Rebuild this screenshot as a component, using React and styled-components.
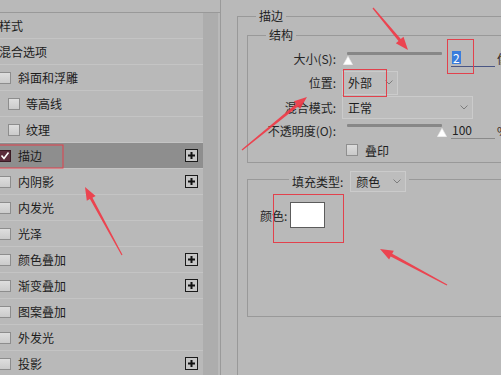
import React from "react";
import styled, { createGlobalStyle } from "styled-components";

const Global = createGlobalStyle`
  html, body { margin: 0; padding: 0; background: #b9b9b9; }
  body { font-family: "Noto Sans CJK SC", "Noto Sans", sans-serif; }
`;

const Page = styled.div`
  position: relative;
  width: 501px;
  height: 375px;
  overflow: hidden;
  display: flex;
  background: #b9b9b9;
  font-family: "Noto Sans CJK SC", "Noto Sans", sans-serif;
  font-size: 12px;
  color: #1f1f1f;
`;

/* ---------- left: style list ---------- */
const Sidebar = styled.aside`
  flex: 0 0 220px;
  border-right: 1px solid #9a9a9a;
  padding-top: 12px;
  display: flex;
  flex-direction: column;
  overflow: hidden;
`;

const SideBody = styled.div`
  flex: 1;
  display: flex;
  border-top: 1px solid #999;
`;

const List = styled.ul`
  list-style: none;
  margin: 0 0 0 -1px;
  padding: 0;
  flex: 0 0 204px;
`;

const Scroll = styled.div`
  flex: 0 0 15px;
  background: #adadad;
  margin-right: 2px;
`;

const Row = styled.li`
  height: 26px;
  box-sizing: border-box;
  display: flex;
  align-items: center;
  padding-left: ${(p) => (p.$indent ? 9 : 0)}px;
  border-bottom: 1px solid #c4c4c4;
  background: ${(p) => (p.$selected ? "#8e8e8e" : "transparent")};
  white-space: nowrap;
  line-height: 16px;
`;

const Box = styled.span`
  flex: 0 0 auto;
  width: 12px;
  height: 12px;
  box-sizing: border-box;
  margin-right: ${(p) => (p.$indent ? 6 : 7)}px;
  border: 1px solid ${(p) => (p.$checked ? "#3a1a24" : "#8d8d8d")};
  background: ${(p) =>
    p.$checked ? "#5b2c3c" : "linear-gradient(#dedede, #cbcbcb)"};
  display: flex;
  align-items: center;
  justify-content: center;
`;

const ItemText = styled.span`
  color: #1c1c1c;
`;

const PlusWrap = styled.span`
  margin-left: auto;
  margin-right: 5px;
  display: flex;
`;

const PlusIcon = () => (
  <PlusWrap>
    <svg width="13" height="13" viewBox="0 0 13 13">
      <rect x="0.5" y="0.5" width="12" height="12" fill="#c6c6c6" stroke="#1a1a1a" />
      <rect x="3" y="5.5" width="7" height="2" fill="#111" />
      <rect x="5.5" y="3" width="2" height="7" fill="#111" />
    </svg>
  </PlusWrap>
);

const Check = () => (
  <svg width="10" height="10" viewBox="0 0 10 10">
    <path d="M1.5 4.5 L4 7.5 L8.5 1.5" fill="none" stroke="#fff" strokeWidth="1.6" />
  </svg>
);

const items = [
  { t: "样式", plain: true },
  { t: "混合选项", plain: true },
  { t: "斜面和浮雕" },
  { t: "等高线", indent: true },
  { t: "纹理", indent: true },
  { t: "描边", checked: true, selected: true, plus: true },
  { t: "内阴影", plus: true },
  { t: "内发光" },
  { t: "光泽" },
  { t: "颜色叠加", plus: true },
  { t: "渐变叠加", plus: true },
  { t: "图案叠加" },
  { t: "外发光" },
  { t: "投影", plus: true },
];

/* ---------- right: stroke settings ---------- */
const Main = styled.main`
  flex: 1;
  min-width: 0;
  overflow: hidden;
  padding-top: 8px;
`;

const OuterGroup = styled.fieldset`
  margin: 0 0 0 16px;
  padding: 0;
  width: 330px;
  height: 420px;
  box-sizing: border-box;
  border: 1px solid #999;
  min-width: 0;
`;

const Legend = styled.legend`
  margin-left: ${(p) => p.$ml}px;
  padding: 0 3px;
  line-height: 16px;
  color: #1f1f1f;
`;

const SubGroup = styled.fieldset`
  margin: ${(p) => p.$mt}px 0 0 9px;
  padding: 0;
  border: 1px solid #999;
  min-width: 0;
`;

const Form = styled.div`
  display: grid;
  grid-template-columns: 88px 1fr;
  grid-template-rows: 24px 25px 25px 20px 20px;
  column-gap: 6px;
  padding: 3px 0 2px 0;
  align-items: center;
`;

const Label = styled.span`
  text-align: right;
  color: #262626;
  white-space: nowrap;
`;

const Field = styled.div`
  display: flex;
  align-items: center;
  white-space: nowrap;
`;

const Slider = styled.div`
  flex: 0 0 95px;
  width: 95px;
  margin-left: 5px;
  display: flex;
  flex-direction: column;
  align-items: flex-start;
  gap: 1px;
`;

const Track = styled.div`
  align-self: stretch;
  height: 3px;
  background: #878787;
  border-radius: 1px;
`;

const ThumbWrap = styled.span`
  display: flex;
  flex: none;
  width: 10px;
  margin-left: ${(p) => p.$pos - 5}px;
  & > svg { flex: none; }
`;

const Thumb = ({ pos }) => (
  <ThumbWrap $pos={pos}>
    <svg width="10" height="9" viewBox="0 0 10 9">
      <path d="M5 0.3 L9.7 8.7 L0.3 8.7 Z" fill="#ffffff" stroke="#e8e8e8" strokeWidth="0.6" strokeLinejoin="round" />
    </svg>
  </ThumbWrap>
);

const NumInput = styled.div`
  width: 44px;
  height: 18px;
  box-sizing: border-box;
  margin-left: 9px;
  padding-left: 1px;
  border-bottom: 1px solid ${(p) => (p.$focus ? "#4a5684" : "#8a8a8a")};
  display: flex;
  align-items: center;
  color: #222;
`;

const Selected = styled.span`
  background: #3a7ddc;
  color: #fff;
  line-height: 13px;
  padding: 0 1px;
`;

const Unit = styled.span`
  margin-left: 2px;
  color: #3a2a20;
`;

const Select = styled.div`
  width: ${(p) => p.$w}px;
  height: ${(p) => p.$h}px;
  box-sizing: border-box;
  border: 1px solid #cbcbcb;
  background: #bdbdbd;
  display: flex;
  align-items: center;
  padding-left: 5px;
  padding-right: 4px;
  flex: 0 0 auto;
  color: #1c1c1c;
`;

const ChevronWrap = styled.span`
  margin-left: auto;
  display: flex;
`;

const Chevron = () => (
  <ChevronWrap>
    <svg width="8" height="5" viewBox="0 0 8 5">
      <polyline points="0.5,0.5 4,4 7.5,0.5" fill="none" stroke="#7c7c7c" strokeWidth="1" />
    </svg>
  </ChevronWrap>
);

const SmallBox = styled.span`
  width: 12px;
  height: 12px;
  box-sizing: border-box;
  margin-left: 4px;
  margin-right: 7px;
  border: 1px solid #8f8f8f;
  background: linear-gradient(#dcdcdc, #cacaca);
`;

const FillGroup = styled.fieldset`
  margin: 8px 0 0 9px;
  padding: 14px 0 88px 12px;
  border: 1px solid #999;
  min-width: 0;
`;

const FillLegend = styled.legend`
  margin-left: 29px;
  padding: 0 3px;
  height: 17px;
  display: flex;
  align-items: flex-start;
  gap: 7px;
`;

const LegendText = styled.span`
  line-height: 21px;
  color: #1f1f1f;
`;

const ColorRow = styled.div`
  display: flex;
  align-items: center;
`;

const Swatch = styled.div`
  width: 35px;
  height: 26px;
  box-sizing: border-box;
  margin-left: 3px;
  border: 1px solid #5c5c5c;
  background: #ffffff;
`;

/* ---------- annotation overlay ---------- */
const Overlay = styled.svg`
  position: absolute;
  left: 0;
  top: 0;
  pointer-events: none;
`;

function arrowPoints(x1, y1, x2, y2) {
  const dx = x2 - x1;
  const dy = y2 - y1;
  const L = Math.hypot(dx, dy);
  const ux = dx / L;
  const uy = dy / L;
  const nx = -uy;
  const ny = ux;
  const hl = 13;
  const hw = 5;
  const w0 = 0.6;
  const w1 = 1.5;
  const bx = x2 - ux * hl;
  const by = y2 - uy * hl;
  const pts = [
    [x1 + nx * w0, y1 + ny * w0],
    [bx + nx * w1, by + ny * w1],
    [bx + nx * hw, by + ny * hw],
    [x2, y2],
    [bx - nx * hw, by - ny * hw],
    [bx - nx * w1, by - ny * w1],
    [x1 - nx * w0, y1 - ny * w0],
  ];
  return pts.map((p) => p.map((v) => v.toFixed(1)).join(",")).join(" ");
}

const arrows = [
  [373, 8, 408, 50],
  [242, 150, 307, 97],
  [122, 255, 85, 187],
  [447, 285, 380, 249],
];

const boxes = [
  [-1, 145, 64, 23],
  [447.5, 39.5, 26, 34],
  [343.5, 69.5, 43, 27],
  [273.5, 194.5, 70, 48],
];

export default function App() {
  return (
    <>
      <Global />
      <Page>
        <Sidebar>
          <SideBody>
            <List>
              {items.map((it) => (
                <Row key={it.t} $indent={it.indent} $selected={it.selected}>
                  {!it.plain && (
                    <Box $indent={it.indent} $checked={it.checked}>
                      {it.checked && <Check />}
                    </Box>
                  )}
                  <ItemText>{it.t}</ItemText>
                  {it.plus && <PlusIcon />}
                </Row>
              ))}
            </List>
            <Scroll />
          </SideBody>
        </Sidebar>

        <Main>
          <OuterGroup>
            <Legend $ml={18}>描边</Legend>
            <SubGroup $mt={3}>
              <Legend $ml={18}>结构</Legend>
              <Form>
                <Label>大小(S):</Label>
                <Field>
                  <Slider>
                    <Track />
                    <Thumb pos={1} />
                  </Slider>
                  <NumInput $focus>
                    <Selected>2</Selected>
                  </NumInput>
                  <Unit>像素</Unit>
                </Field>

                <Label>位置:</Label>
                <Field>
                  <Select $w={56} $h={24}>
                    外部
                    <Chevron />
                  </Select>
                </Field>

                <Label>混合模式:</Label>
                <Field>
                  <Select $w={131} $h={23}>
                    正常
                    <Chevron />
                  </Select>
                </Field>

                <Label>不透明度(O):</Label>
                <Field>
                  <Slider>
                    <Track />
                    <Thumb pos={95} />
                  </Slider>
                  <NumInput>100</NumInput>
                  <Unit>%</Unit>
                </Field>

                <span />
                <Field>
                  <SmallBox />
                  叠印
                </Field>
              </Form>
            </SubGroup>

            <FillGroup>
              <FillLegend>
                <LegendText>填充类型:</LegendText>
                <Select $w={56} $h={21}>
                  颜色
                  <Chevron />
                </Select>
              </FillLegend>
              <ColorRow>
                <Label>颜色:</Label>
                <Swatch />
              </ColorRow>
            </FillGroup>
          </OuterGroup>
        </Main>

        <Overlay width="501" height="375" viewBox="0 0 501 375">
          {boxes.map(([x, y, w, h], i) => (
            <rect key={i} x={x} y={y} width={w} height={h} fill="none" stroke="#e2414c" strokeWidth="1" />
          ))}
          {arrows.map(([a, b, c, d], i) => (
            <polygon key={i} points={arrowPoints(a, b, c, d)} fill="#ef3a46" opacity="0.92" />
          ))}
        </Overlay>
      </Page>
    </>
  );
}
